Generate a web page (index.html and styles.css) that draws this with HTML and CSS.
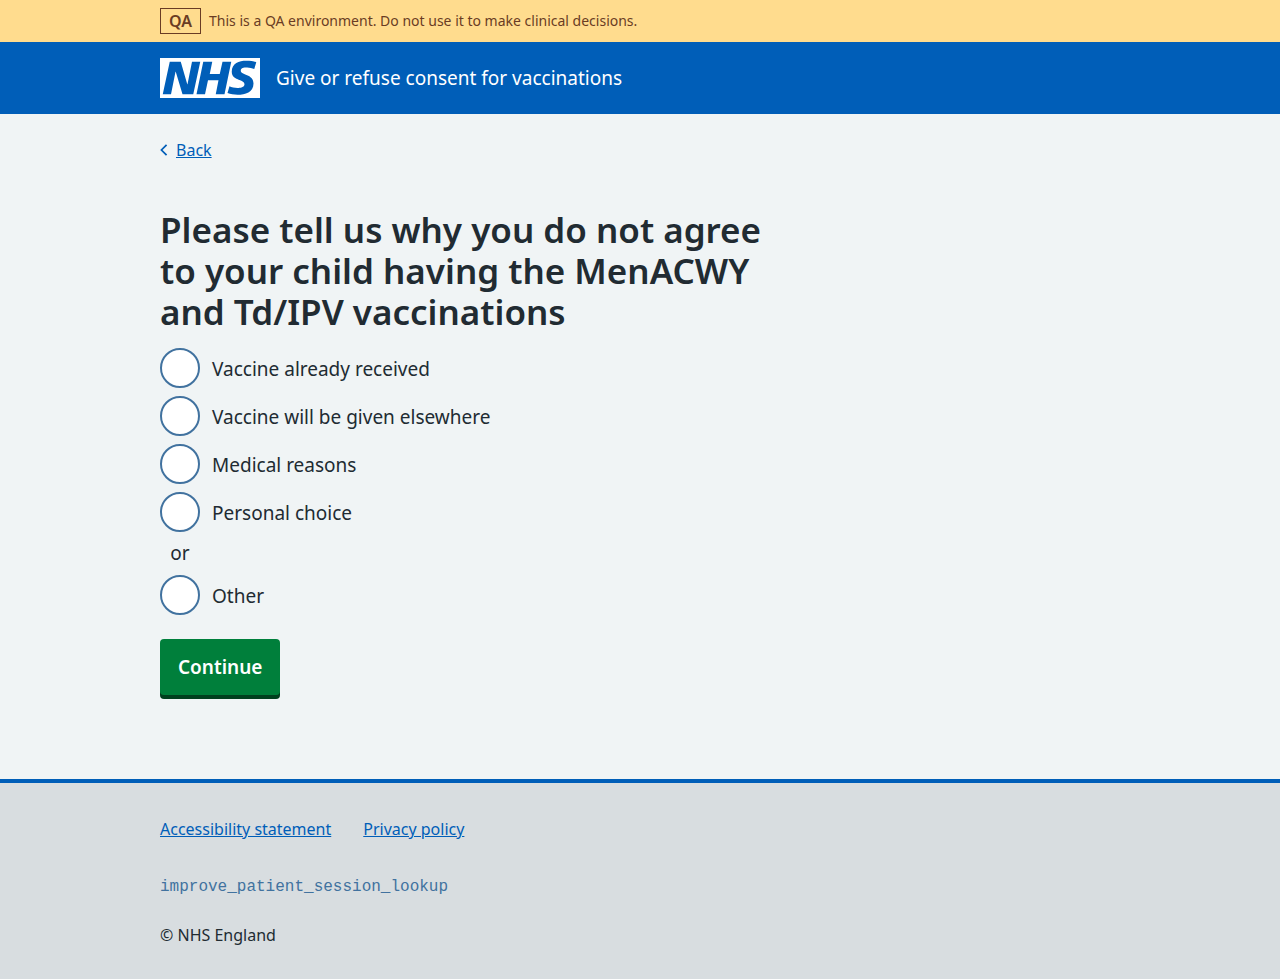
FILE: index.html
```html
<!DOCTYPE html>
<html lang="en">
<head>
<meta charset="utf-8">
<meta name="viewport" content="width=device-width, initial-scale=1">
<title>Give or refuse consent for vaccinations</title>
<link rel="stylesheet" href="styles.css">
</head>
<body>
<div class="environment">
  <div class="container environment-inner">
    <strong class="tag">QA</strong>
    <span>This is a QA environment. Do not use it to make clinical decisions.</span>
  </div>
</div>
<header class="header">
  <div class="container header-inner">
    <svg class="logo" viewBox="0 0 200 80" role="img" aria-label="NHS"><path fill="currentColor" d="M200 0v80H0V0h200Zm-27.5 5.5c-14.5 0-29 5-29 22 0 10.2 7.7 13.5 14.7 16.3l.7.3c5.4 2 10.1 3.9 10.1 8.4 0 6.5-8.5 7.5-14 7.5s-12.5-1.5-16-3.5L135 70c5.500 2 13.500 3.500 20 3.500 15.500 0 32-4.500 32-22.500 0-19.500-25.500-16.500-25.500-25.500 0-5.500 5.500-6.500 12.500-6.500a35 35 0 0 1 14.500 3l4-13.500c-4.500-2-12-3-20-3Zm-131 2h-22l-14 65H22l9-45h.5l13.500 45h21.500l14-65H64l-9 45h-.5l-13-45Zm63 0h-18l-13.500 65h17l6-28H117l-5.500 28H129l13.500-65H125L119.500 32h-20l5-24.500Z"/></svg>
    <span class="service-name">Give or refuse consent for vaccinations</span>
  </div>
</header>
<div class="page">
  <div class="container">
    <a class="back-link" href="#">
      <svg class="back-icon" viewBox="0 0 8 14" aria-hidden="true"><path d="M7 1 1 7l6 6"/></svg>
      <span class="back-text">Back</span>
    </a>
    <main class="main">
      <form>
        <fieldset class="fieldset">
          <legend class="legend"><h1 class="heading">Please tell us why you do not agree to your child having the MenACWY and Td/IPV vaccinations</h1></legend>
          <div class="radios">
            <div class="radio-item"><input class="radio" type="radio" name="reason" id="received"><label class="radio-label" for="received">Vaccine already received</label></div>
            <div class="radio-item"><input class="radio" type="radio" name="reason" id="elsewhere"><label class="radio-label" for="elsewhere">Vaccine will be given elsewhere</label></div>
            <div class="radio-item"><input class="radio" type="radio" name="reason" id="medical"><label class="radio-label" for="medical">Medical reasons</label></div>
            <div class="radio-item"><input class="radio" type="radio" name="reason" id="personal"><label class="radio-label" for="personal">Personal choice</label></div>
            <div class="divider">or</div>
            <div class="radio-item"><input class="radio" type="radio" name="reason" id="other"><label class="radio-label" for="other">Other</label></div>
          </div>
        </fieldset>
        <button class="button" type="button">Continue</button>
      </form>
    </main>
  </div>
</div>
<footer class="footer">
  <div class="container">
    <nav class="footer-links" aria-label="Support links">
      <a href="#">Accessibility statement</a>
      <a href="#">Privacy policy</a>
    </nav>
    <code class="version">improve_patient_session_lookup</code>
    <p class="copyright">© NHS England</p>
  </div>
</footer>
</body>
</html>
```
FILE: styles.css
```css
* { box-sizing: border-box; }

body {
  display: flex;
  flex-direction: column;
  min-height: 100vh;
  margin: 0;
  background: #d8dde0;
  color: #212b32;
  font-family: "Noto Sans", "Open Sans", sans-serif;
  font-size: 19px;
  line-height: 28px;
}

a { color: #005eb8; }

.container {
  width: 100%;
  max-width: 1024px;
  padding: 0 32px;
  margin: 0 auto;
}

.environment {
  padding: 8px 0;
  background: #ffdc8e;
  color: #6a3c24;
  font-size: 14px;
  line-height: 26px;
}

.environment-inner {
  display: flex;
  align-items: center;
  gap: 8px;
}

.tag {
  padding: 0 8px;
  border: 1px solid #6a3c24;
  font-size: 16px;
  font-weight: 600;
  line-height: 24px;
}

.header {
  padding: 16px 0;
  background: #005eb8;
  color: #fff;
}

.header-inner {
  display: flex;
  align-items: center;
  gap: 16px;
}

.logo {
  display: block;
  width: 100px;
  height: 40px;
}

.page {
  padding: 24px 0 80px;
  background: #f0f4f5;
}

.back-link {
  display: flex;
  align-items: center;
  gap: 8px;
  width: fit-content;
  font-size: 16px;
  line-height: 24px;
  text-decoration: none;
}

.back-text { text-decoration: underline; }

.back-icon {
  width: 8px;
  height: 12px;
  fill: none;
  stroke: currentColor;
  stroke-width: 2;
}

.main {
  max-width: 640px;
  padding-top: 47px;
}

.fieldset {
  min-width: 0;
  padding: 0;
  border: 0;
  margin: 0 0 24px;
}

.legend {
  padding: 0;
  margin-bottom: 16px;
}

.heading {
  margin: 0;
  font-size: 35px;
  font-weight: 600;
  line-height: 41px;
}

.radios {
  display: flex;
  flex-direction: column;
  gap: 8px;
}

.radio-item {
  display: flex;
  align-items: center;
  gap: 12px;
}

.radio {
  flex: none;
  width: 40px;
  height: 40px;
  border: 2px solid #41729f;
  border-radius: 50%;
  margin: 0;
  appearance: none;
  background: #fff;
}

.radio:checked {
  background: #212b32;
  box-shadow: inset 0 0 0 8px #fff;
}

.radio-label { padding-top: 2px; }

.divider {
  width: 40px;
  line-height: 27px;
  text-align: center;
}

.button {
  display: block;
  padding: 14px 18px;
  border: 0;
  border-radius: 4px;
  margin-bottom: 4px;
  background: #007f3b;
  box-shadow: 0 4px 0 #00401e;
  color: #fff;
  font: inherit;
  font-weight: 600;
}

.footer {
  flex: 1;
  padding: 32px 0;
  border-top: 4px solid #005eb8;
  font-size: 16px;
}

.footer-links {
  display: flex;
  flex-wrap: wrap;
  gap: 8px 32px;
  margin-bottom: 30px;
}

.version {
  display: block;
  margin-bottom: 20px;
  color: #41729f;
  font-family: "Liberation Mono", monospace;
  font-size: 16px;
}

.copyright { margin: 0; }
```
